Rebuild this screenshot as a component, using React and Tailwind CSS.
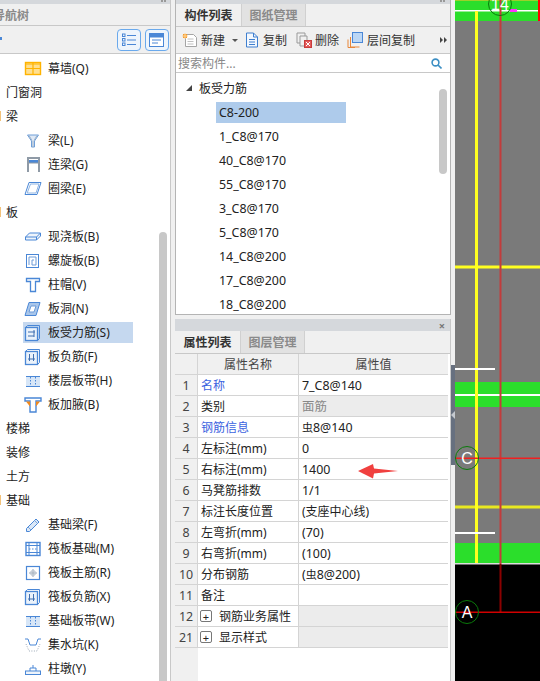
import React from "react";

const B = "#4a87d6";
const Ico = ({ children }) => (
  <svg width="18" height="18" viewBox="0 0 18 18" fill="none" stroke={B} strokeWidth="1" className="shrink-0">
    {children}
  </svg>
);

const icons = {
  wall: <Ico><rect x="1.5" y="2.5" width="15" height="12" fill="#ffdf8f" stroke="#ffb300" strokeWidth="1.4" /><path d="M1.5 8.5h15M9 2.5v12M1.5 4h15" stroke="#ffb300" strokeWidth="1.2" /></Ico>,
  beam: <Ico><path d="M3.5 3h11l-4 6v6h-3V9z" fill="#dfe9f6" stroke="#6f9fd8" /><path d="M5 3.5l3 5M13 3.5l-3 5M9 9v6" stroke="#9db2c9" /></Ico>,
  lian: <Ico><path d="M4 16V2h11v14" stroke="#8f9aa6" strokeWidth="2" /><rect x="5" y="4" width="9" height="3" fill={B} stroke="none" /><path d="M5 7h9" stroke="#8f9aa6" /></Ico>,
  ring: <Ico><path d="M5 2.5h12l-4 12H1z" fill="#fff" /><path d="M6.5 4h8.5l-3 9H3.2z" stroke="#8eb4e3" /></Ico>,
  slab: <Ico><path d="M1.5 9l4-4h11v3l-4 4h-11z" fill="#eef4fb" /><path d="M1.5 9h11l4-4M12.5 9v3" /></Ico>,
  spiral: <Ico><rect x="2.5" y="2.5" width="12" height="13" /><path d="M5 13V5h7v8H8V8h2" stroke="#6c9bd8" /></Ico>,
  cap: <Ico><path d="M2.5 2.5h13v3h-4v10h-5v-10h-4z" fill="#fff" strokeWidth="1.3" /></Ico>,
  hole: <Ico><path d="M5 2.5h11l-4 13H1z" fill="#a9c6ea" /><path d="M7 6h5l-2 6H5z" fill="#fff" stroke="#6c9bd8" /></Ico>,
  main: <Ico><rect x="1.5" y="3.5" width="12" height="13" fill="#eaf2fb" strokeWidth="1.3" /><path d="M1.5 3.5l2-2h12v13l-2 2" /><path d="M4 8h7M4 12h6M10 6v7" stroke="#3f6fb0" /></Ico>,
  neg: <Ico><rect x="1.5" y="3.5" width="12" height="13" fill="#eaf2fb" strokeWidth="1.3" /><path d="M1.5 3.5l2-2h12v13l-2 2" /><path d="M4 11h7M5.5 6v7M9.5 6v7" stroke="#3f6fb0" /></Ico>,
  strip: <Ico><rect x="2" y="4" width="14" height="11" fill="#d7e6f7" stroke="none" /><path d="M2 4.5h14M2 14.5h14" strokeWidth="1" /><path d="M6.5 5v9M11.5 5v9" stroke="#4a87d6" strokeDasharray="1.5 1.5" /></Ico>,
  hau: <Ico><path d="M1 2h16v3h-5v11H6V5H1z" fill="#fff" stroke={B} strokeWidth="1.4" /><path d="M2 5.5h4v5zM16 5.5h-4v5z" fill="#f28a1e" stroke="none" /></Ico>,
  pencil: <Ico><path d="M2.5 12.5L12 3l3 3-9.5 9.5H2.5z" fill="#dbe8f7" /><path d="M10.5 4.5l3 3M4 11l3 3" stroke="#7ba6dd" /></Ico>,
  raft: <Ico><rect x="2" y="2.5" width="14" height="13" strokeWidth="1.4" /><path d="M5 2.5v13M13 2.5v13M2 5.5h14M2 12.5h14" /><path d="M5 9h8" strokeDasharray="1.5 1.5" /></Ico>,
  rmain: <Ico><rect x="2.5" y="2.5" width="13" height="13" strokeWidth="1.2" /><path d="M9 5v8M5 9h8" stroke="#9aa7b5" /><path d="M7 7h4v4H7z" stroke="#b5c0cc" /></Ico>,
  pit: <Ico><path d="M1 3h3l2 6h6l2-6h3" /><path d="M2 8l3 7h8l3-7" stroke="#9aa7b5" strokeDasharray="1 1.5" /></Ico>,
  pier: <Ico><rect x="1.5" y="11" width="15" height="3.5" fill="#eef4fb" /><path d="M6 11V8h6v3M9 8V5" /></Ico>,
};

const Cat = ({ t, mark }) => (
  <div className="h-6 flex items-center pl-[6px] pt-[2px] relative">
    {mark && <span className="absolute left-0 top-[7px] w-px h-[10px] bg-[#f3c27a]" />}
    {t}
  </div>
);
const Item = ({ t, i, sel }) => (
  <div className="h-6 flex items-center pl-[25px]">
    <div className={"flex items-center h-[21px] mt-[1px] -ml-[2px] pl-[1px] w-[110px] gap-[6px] " + (sel ? "bg-[#c5d8ef]" : "")}>
      {icons[i]}
      <span className="whitespace-nowrap pt-[1px]">{t}</span>
    </div>
  </div>
);

const Tabs = ({ a, b }) => (
  <div className="h-[23px] flex bg-[#f0f0f0] border-b border-[#c8c8c8] font-semibold">
    <div className="w-[65px] h-[22px] pt-[2px] flex items-center justify-center text-[#333]">{a}</div>
    <div className="w-[65px] h-[22px] pt-[2px] flex items-center justify-center text-[#8a8a8a] bg-[#e2e2e2] border-x border-[#d0d0d0]">{b}</div>
  </div>
);

const Row = ({ n, name, blue, val, grayVal, plus, shade }) => (
  <div className="flex h-[21px] w-[273px] border-b border-[#d4d4d4]">
    <div className="w-[23px] shrink-0 pt-[2px] bg-[#f0f0f0] border-r border-[#d4d4d4] flex items-center justify-center text-[#444] text-[12.4px]">{n}</div>
    <div className={"w-[101px] shrink-0 border-r border-[#d4d4d4] flex items-center whitespace-nowrap pl-[3px] " + (blue ? "text-[#3b63e0]" : "text-[#222]")}>
      {plus && <span className="w-[12px] h-[12px] -ml-[1px] mr-[7px] border border-[#777] rounded-[2px] flex items-center justify-center text-[11px] leading-none">+</span>}
      <span className="pt-[2px]">{name}</span>
    </div>
    <div className={"flex-1 flex items-center pl-[3px] pt-[2px] text-[12.4px] " + (shade ? "bg-[#ececec] " : "") + (grayVal ? "text-[#888]" : "text-[#222]")}>{val}</div>
  </div>
);

const list = ["C8-200", "1_C8@170", "40_C8@170", "55_C8@170", "3_C8@170", "5_C8@170", "14_C8@200", "17_C8@200", "18_C8@200"];

export default function App() {
  return (
    <div className="w-[540px] h-[681px] overflow-hidden flex bg-[#f0f0f0] text-[12px] text-[#222] font-['Noto_Sans','Noto_Sans_CJK_SC',sans-serif]">
      {/* left tree */}
      <div className="w-[171px] shrink-0 flex flex-col border-r border-[#c8c8c8]">
        <div className="h-[4px] bg-[#d5d8dc] flex justify-end gap-px pr-[4px]">
          <span className="w-[2px] h-[2px] bg-[#999]" />
          <span className="w-[2px] h-[2px] bg-[#999]" />
        </div>
        <div className="h-[22px] flex items-center pt-[2px] border-b border-[#c8c8c8] font-semibold text-[#8a8a8a] whitespace-nowrap overflow-hidden">
          <span className="-ml-[7px]">导航树</span>
        </div>
        <div className="h-[28px] flex items-center justify-end gap-[4px] pr-[1px] border-b border-[#c8c8c8] relative">
          <span className="absolute left-0 top-[11px] w-[2px] h-[3px] bg-[#4a87d6]" />
          <div className="w-[24px] h-[22px] rounded-[4px] border border-[#6aa9ec] bg-[#eef5fc] flex items-center justify-center">
            <svg width="14" height="14" viewBox="0 0 14 14" fill="none" stroke="#4a87d6"><path d="M5 2.5h9M5 7h9M5 11.5h9" /><rect x="0.5" y="1" width="2.5" height="2.5" /><rect x="0.5" y="5.5" width="2.5" height="2.5" /><rect x="0.5" y="10" width="2.5" height="2.5" /></svg>
          </div>
          <div className="w-[24px] h-[22px] rounded-[4px] border border-[#6aa9ec] bg-[#eef5fc] flex items-center justify-center">
            <svg width="16" height="14" viewBox="0 0 16 14" fill="none" stroke="#4a87d6"><rect x="0.5" y="0.5" width="14" height="13" fill="#fff" /><rect x="0.5" y="0.5" width="14" height="3.5" fill="#4a87d6" /><path d="M3 7h9M3 10h6" /></svg>
          </div>
        </div>
        <div className="flex-1 bg-white relative overflow-hidden pt-[2px]">
          <Item t="幕墙(Q)" i="wall" />
          <Cat t="门窗洞" />
          <Cat t="梁" mark />
          <Item t="梁(L)" i="beam" />
          <Item t="连梁(G)" i="lian" />
          <Item t="圈梁(E)" i="ring" />
          <Cat t="板" mark />
          <Item t="现浇板(B)" i="slab" />
          <Item t="螺旋板(B)" i="spiral" />
          <Item t="柱帽(V)" i="cap" />
          <Item t="板洞(N)" i="hole" />
          <Item t="板受力筋(S)" i="main" sel />
          <Item t="板负筋(F)" i="neg" />
          <Item t="楼层板带(H)" i="strip" />
          <Item t="板加腋(B)" i="hau" />
          <Cat t="楼梯" />
          <Cat t="装修" />
          <Cat t="土方" />
          <Cat t="基础" mark />
          <Item t="基础梁(F)" i="pencil" />
          <Item t="筏板基础(M)" i="raft" />
          <Item t="筏板主筋(R)" i="rmain" />
          <Item t="筏板负筋(X)" i="neg" />
          <Item t="基础板带(W)" i="strip" />
          <Item t="集水坑(K)" i="pit" />
          <Item t="柱墩(Y)" i="pier" />
          <div className="absolute right-[3px] top-[178px] bottom-0 w-[8px] rounded-t-[4px] bg-[#c8c8c8]" />
        </div>
      </div>

      {/* middle */}
      <div className="w-[276px] shrink-0 ml-[4px] flex flex-col">
        <div className="h-[315px] flex flex-col border border-t-0 border-[#b4b4b4] bg-white">
          <div className="h-[4px] bg-[#d5d8dc] flex justify-end gap-px pr-[5px]">
            <span className="w-[2px] h-[2px] bg-[#999]" />
            <span className="w-[2px] h-[2px] bg-[#999]" />
          </div>
          <Tabs a="构件列表" b="图纸管理" />
          <div className="h-[27px] bg-[#f0f0f0] border-b border-[#c8c8c8] flex items-center whitespace-nowrap text-[#333] pl-[6px]">
            <svg width="16" height="15" viewBox="0 0 16 15" fill="none" className="mr-[3px]"><path d="M3.5 1.5h8l3 3v9h-11z" fill="#fff" stroke="#a5a5a5" /><path d="M5.5 6h6M5.5 8.5h6M5.5 11h6" stroke="#c0c0c0" /><path d="M1 1h4v4H1z" fill="#f49a2c" /><path d="M3 0v6M0 3h6" stroke="#ffd79a" /></svg>
            <span className="pt-[2px]">新建</span>
            <span className="ml-[7px] w-0 h-0 border-x-[3px] border-x-transparent border-t-[3px] border-t-[#555]" />
            <svg width="14" height="16" viewBox="0 0 14 16" fill="none" stroke="#3f7fcf" className="ml-[7px] mr-[4px]"><path d="M1.5 1h7l4 4v10h-11z" fill="#f3f8fe" /><path d="M8.5 1v4h4M4 7.5h6M4 10h6M4 12.5h6" /></svg>
            <span className="pt-[2px]">复制</span>
            <svg width="16" height="16" viewBox="0 0 16 16" fill="none" className="ml-[9px] mr-[3px]"><path d="M1 1h8v3M1 1v10h3" stroke="#999" /><path d="M4 4h7v5M4 4v10h4" stroke="#999" /><rect x="8.5" y="8.5" width="7" height="7" fill="#e45a5a" stroke="#c83c3c" /><path d="M10 10l4 4M14 10l-4 4" stroke="#fff" /></svg>
            <span className="pt-[2px]">删除</span>
            <svg width="16" height="16" viewBox="0 0 16 16" fill="none" className="ml-[8px] mr-[4px]"><path d="M3.5 5v10h9M1 7.5v8h7" stroke="#e8873a" /><rect x="5.5" y="0.5" width="10" height="10" fill="#bcd7f5" stroke="#4a87d6" /></svg>
            <span className="pt-[2px]">层间复制</span>
            <span className="ml-auto mr-[3px] flex items-center">
              <span className="w-0 h-0 border-y-[3px] border-y-transparent border-l-[3px] border-l-[#444]" />
              <span className="w-0 h-0 ml-px border-y-[3px] border-y-transparent border-l-[3px] border-l-[#444]" />
            </span>
          </div>
          <div className="h-[19px] flex items-center px-[2px] border-b border-[#c8c8c8] text-[#888]">
            <span className="pt-[1px]">搜索构件...</span>
            <svg width="11" height="11" viewBox="0 0 11 11" fill="none" stroke="#3d8fc4" strokeWidth="1.6" className="ml-auto mr-[6px]"><circle cx="4.5" cy="4.5" r="3.4" /><path d="M7 7l3.5 3.5" /></svg>
          </div>
          <div className="flex-1 relative overflow-hidden pt-[3px]">
            <div className="h-6 flex items-center pl-[10px]">
              <span className="w-0 h-0 border-l-[6px] border-l-transparent border-b-[6px] border-b-[#444] mr-[7px]" />
              <span className="pt-[2px]">板受力筋</span>
            </div>
            {list.map((t, i) => (
              <div key={t} className="h-6 flex items-center pl-[40px]">
                <div className={"h-[21px] w-[130px] flex items-center pl-[3px] pt-[2px] text-[12.4px] " + (i === 0 ? "bg-[#aecbeb]" : "")}>{t}</div>
              </div>
            ))}
            <div className="absolute right-[3px] top-[16px] w-[8px] h-[85px] rounded-[4px] bg-[#c8c8c8]" />
          </div>
        </div>
        <div className="h-[4px]" />
        <div className="flex-1 flex flex-col border-r border-[#c8c8c8] bg-white overflow-hidden">
          <div className="h-[12px] shrink-0 bg-[#d5d8dc] flex items-center justify-end pr-[5px] text-[#777] text-[11px] font-bold leading-none">×</div>
          <Tabs a="属性列表" b="图层管理" />
          <div className="flex h-[21px] w-[273px] border-b border-[#d4d4d4] bg-[#f0f0f0] text-[#444]">
            <div className="w-[23px] border-r border-[#d4d4d4]" />
            <div className="w-[101px] pt-[2px] border-r border-[#d4d4d4] flex items-center justify-center">属性名称</div>
            <div className="flex-1 pt-[2px] flex items-center justify-center">属性值</div>
          </div>
          <Row n="1" name="名称" blue val="7_C8@140" />
          <Row n="2" name="类别" val="面筋" grayVal shade />
          <Row n="3" name="钢筋信息" blue val={<span><span className="text-[11px]">虫</span>8@140</span>} />
          <Row n="4" name="左标注(mm)" val="0" />
          <Row n="5" name="右标注(mm)" val="1400" />
          <Row n="6" name="马凳筋排数" val="1/1" />
          <Row n="7" name="标注长度位置" val={<span className="text-[12px]">(支座中心线)</span>} />
          <Row n="8" name="左弯折(mm)" val="(70)" />
          <Row n="9" name="右弯折(mm)" val="(100)" />
          <Row n="10" name="分布钢筋" val={<span>(<span className="text-[11px]">虫</span>8@200)</span>} />
          <Row n="11" name="备注" val="" />
          <Row n="12" name="钢筋业务属性" plus val="" shade />
          <Row n="21" name="显示样式" plus val="" shade />
          <div className="flex-1 flex"><div className="w-[23px] bg-[#f0f0f0]" /></div>
        </div>
      </div>

      {/* splitter */}
      <div className="w-[4px] shrink-0 relative">
        <div className="absolute left-0 top-[365px] w-[4px] h-[100px] bg-[#67707f] flex items-center">
          <span className="w-0 h-0 border-y-[4px] border-y-transparent border-r-[4px] border-r-[#c5c9cf]" />
        </div>
      </div>

      {/* canvas drawing */}
      <svg width="85" height="681" viewBox="455 0 85 681" className="shrink-0 block">
        <rect x="455" y="0" width="85" height="564" fill="#7a7a7a" />
        <rect x="455" y="564" width="85" height="117" fill="#000" />
        <rect x="455" y="0" width="85" height="21" fill="#2bde2b" />
        <rect x="455" y="0" width="85" height="1" fill="#9bd02a" />
        <rect x="455" y="10" width="85" height="1.5" fill="#fff" />
        <rect x="538" y="0" width="2" height="21" fill="#f00" />
        <rect x="455" y="382" width="85" height="25" fill="#2bde2b" />
        <rect x="455" y="394" width="85" height="2" fill="#fff" />
        <rect x="455" y="543" width="85" height="20" fill="#2bde2b" />
        <rect x="455" y="563" width="85" height="1.5" fill="#ddd" />
        <rect x="455" y="265.5" width="85" height="3" fill="#ffff20" />
        <rect x="455" y="505.5" width="85" height="3" fill="#e8e820" />
        <rect x="475" y="11" width="3" height="552" fill="#ffff20" />
        <rect x="499.5" y="0" width="2" height="564" fill="#c23c3c" />
        <rect x="499.5" y="564" width="2" height="48" fill="#8b0000" />
        <rect x="455" y="368" width="40" height="2" fill="#fff" />
        <rect x="455" y="532" width="40" height="2" fill="#fff" />
        <rect x="455" y="457.5" width="85" height="1.5" fill="#f02020" />
        <rect x="455" y="611.5" width="85" height="1.5" fill="#d00000" />
        <rect x="510" y="9" width="7" height="3" fill="#ff30ff" />
        <circle cx="500" cy="4" r="11.5" fill="none" stroke="#0a7a0a" />
        <circle cx="467" cy="458" r="11.5" fill="none" stroke="#0a7a0a" />
        <circle cx="467" cy="612" r="11.5" fill="none" stroke="#0a7a0a" />
        <text x="500" y="10" textAnchor="middle" fill="#fff" fontSize="16" fontFamily="Liberation Sans">14</text>
        <text x="467" y="464" textAnchor="middle" fill="#fff" fontSize="16" fontFamily="Liberation Sans">C</text>
        <text x="467" y="618" textAnchor="middle" fill="#fff" fontSize="16" fontFamily="Liberation Sans">A</text>
      </svg>

      {/* red arrow annotation */}
      <svg width="40" height="16" viewBox="0 0 40 16" className="absolute left-[358px] top-[463px]">
        <path d="M0 8L15 1l1 4.5L40 8 16 10.5 15 15.5z" fill="#f0403f" />
      </svg>
    </div>
  );
}
